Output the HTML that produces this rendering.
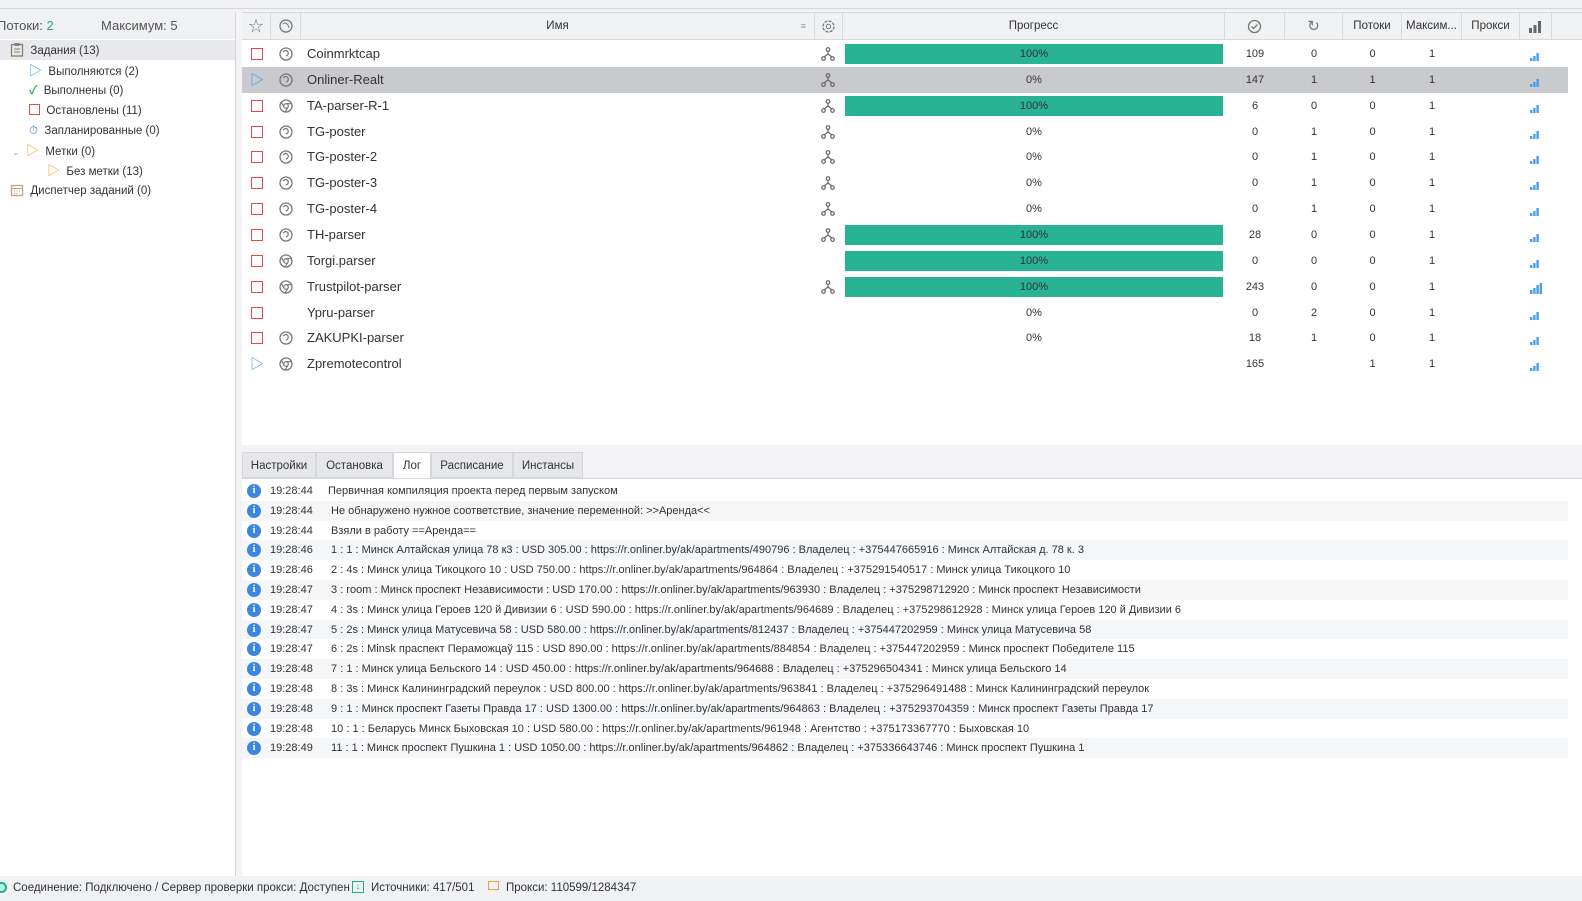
<!DOCTYPE html>
<html><head><meta charset="utf-8">
<style>
*{margin:0;padding:0;box-sizing:border-box}
body{width:1582px;height:901px;background:#f3f3f5;font-family:"Liberation Sans","Noto Sans CJK JP",sans-serif;font-size:12px;color:#333;position:relative;overflow:hidden}
.a{position:absolute}
.top{left:0;top:0;width:1582px;height:9px;background:#eef0f3;border-bottom:1px solid #d4d6da}
.left{left:0;top:12px;width:236px;height:864px;background:#fff;border-right:1px solid #d4d6da}
.lh{left:0;top:0;width:235px;height:27px;background:#f0f1f3;font-size:13px;color:#555;line-height:27px}
.tree div{position:absolute;font-size:11.5px;color:#333;height:20px;line-height:20px;white-space:nowrap}
.tbl{left:242px;top:12px;width:1340px;height:433px;background:#fff;border-top:1px solid #d4d6da}
.hd{left:0;top:0;width:1340px;height:27px;background:#f0f1f3;border-bottom:1px solid #d8dadd}
.hd div{position:absolute;top:0;height:27px;border-right:1px solid #d8dadd;line-height:27px;text-align:center;font-size:11.5px;color:#333}
.row{position:absolute;left:0;width:1326px;height:26px}
.row.sel{background:#c9cacd}
.row div{position:absolute;top:0;height:26px;line-height:26px;font-size:11px;text-align:center}
.row .nm{left:65px;text-align:left;font-size:13px;color:#333}
.pb{left:603px!important;width:378px;top:3px!important;height:20px!important;line-height:20px!important}
.pb.g{background:#27b394}
.stop{left:9px;top:7px!important;width:12px;height:12px!important;border:1.5px solid #e8484d}
.tabs{left:242px;top:452px;width:340px;height:26px}
.tab{position:absolute;top:0;height:26px;line-height:26px;font-size:11.5px;background:#e6e7ea;border:1px solid #d4d6da;text-align:center;color:#333}
.log{left:242px;top:478px;width:1340px;height:398px;background:#fff;border-top:1px solid #d4d6da}
.lr{position:absolute;left:0;height:20px;line-height:20px;font-size:11px;white-space:nowrap;width:1326px}
.ic{position:absolute;left:5px;top:3px;width:14px;height:14px;border-radius:50%;background:#3d86de;color:#fff;font-weight:bold;font-size:10px;line-height:14px;text-align:center;font-family:"Liberation Serif",serif}
.lt{position:absolute;left:28px}
.lm{position:absolute;left:86px}
.status{left:0;top:879px;width:1582px;height:22px;background:#f0f1f3;font-size:11.5px;line-height:18px;color:#333}
</style></head><body>
<div class="a top"></div>
<div class="a left">
 <div class="a lh"><span style="position:absolute;left:-3px">Потоки: <span style="color:#27a98c">2</span></span><span style="position:absolute;left:101px">Максимум: <span>5</span></span></div>
 <div class="a" style="left:0;top:28px;width:235px;height:20px;background:#e8e9ec"></div>
 <div class="tree">
  <div style="left:10px;top:29px"><svg width="14" height="15" style="vertical-align:-3px"><rect x="1.5" y="2.5" width="11" height="11.5" fill="none" stroke="#8a7f70" stroke-width="1.3"/><rect x="4.5" y="1" width="5" height="3" fill="#8a7f70"/><path d="M4 7h6M4 10h6" stroke="#8a7f70"/></svg> &nbsp;Задания (13)</div>
  <div style="left:29px;top:49px"><span style="color:#2a9de0;font-size:13px">▷</span> &nbsp;Выполняются (2)</div>
  <div style="left:29px;top:69px"><span style="color:#22b04b;font-weight:bold">✓</span> &nbsp;Выполнены (0)</div>
  <div style="left:29px;top:89px"><span style="display:inline-block;width:11px;height:11px;border:1.5px solid #e8484d;vertical-align:-1px"></span> &nbsp;Остановлены (11)</div>
  <div style="left:29px;top:109px"><span style="color:#3d86de">⏱</span> &nbsp;Запланированные (0)</div>
  <div style="left:12px;top:129px"><span style="color:#aaa;font-size:9px">⌄</span> &nbsp;<span style="color:#f0a020;font-size:13px">▷</span> &nbsp;Метки (0)</div>
  <div style="left:47px;top:149px"><span style="color:#f0a020;font-size:13px">▷</span> &nbsp;Без метки (13)</div>
  <div style="left:10px;top:169px"><svg width="14" height="14" style="vertical-align:-3px"><rect x="1.5" y="2.5" width="11" height="10" fill="none" stroke="#c9a27a" stroke-width="1.3"/><path d="M2 5.5h10" stroke="#c9a27a"/><path d="M4 8h1M6.5 8h1M9 8h1M4 10.5h1M6.5 10.5h1" stroke="#c9a27a"/></svg> &nbsp;Диспетчер заданий (0)</div>
 </div>
</div>
<div class="a tbl">
 <div class="a hd">
  <div style="left:0;width:29px;color:#777;font-size:15px">☆</div>
  <div style="left:29px;width:30px"><svg width="14" height="14" style="margin-top:6px"><circle cx="7" cy="7" r="6" fill="none" stroke="#777" stroke-width="1.3"/><path d="M4 5q2 -2 4 0t2 4" fill="none" stroke="#777"/></svg></div>
  <div style="left:59px;width:514px">Имя<span style="position:absolute;right:8px;color:#999;font-size:9px">≡</span></div>
  <div style="left:573px;width:28px"><svg width="15" height="15" style="margin-top:6px"><circle cx="7.5" cy="7.5" r="5.5" fill="none" stroke="#777" stroke-width="1.3" stroke-dasharray="3 1.3"/><circle cx="7.5" cy="7.5" r="2.2" fill="none" stroke="#777"/></svg></div>
  <div style="left:601px;width:382px">Прогресс</div>
  <div style="left:983px;width:60px"><svg width="15" height="15" style="margin-top:6px"><circle cx="7.5" cy="7.5" r="6" fill="none" stroke="#777" stroke-width="1.3"/><path d="M4.5 7.5l2 2 4-4" fill="none" stroke="#777" stroke-width="1.3"/></svg></div>
  <div style="left:1043px;width:58px;color:#777;font-size:15px">↻</div>
  <div style="left:1101px;width:59px">Потоки</div>
  <div style="left:1160px;width:60px">Максим...</div>
  <div style="left:1220px;width:58px">Прокси</div>
  <div style="left:1278px;width:32px"><svg width="13" height="12" style="margin-top:8px"><rect x="0" y="7" width="3" height="5" fill="#666"/><rect x="4.5" y="4" width="3" height="8" fill="#666"/><rect x="9" y="0" width="3" height="12" fill="#666"/></svg></div>
 </div>
 <div id="rows"></div>
</div>
<div class="a tabs">
 <div class="tab" style="left:0;width:74px">Настройки</div>
 <div class="tab" style="left:74px;width:77px">Остановка</div>
 <div class="tab" style="left:151px;width:38px;background:#fff;border-bottom-color:#fff">Лог</div>
 <div class="tab" style="left:189px;width:82px">Расписание</div>
 <div class="tab" style="left:271px;width:70px">Инстансы</div>
</div>
<div class="a log" id="log"></div>
<div class="a status">
 <span style="position:absolute;left:-4px;top:3px;width:11px;height:11px;border-radius:50%;border:2px solid #27a98c;background:#bfe"></span>
 <span style="position:absolute;left:13px">Соединение: Подключено / Сервер проверки прокси: Доступен</span>
 <span style="position:absolute;left:352px;top:2px;width:12px;height:12px;border:1.5px solid #27a98c;font-size:9px;line-height:9px;text-align:center;color:#27a98c">↓</span>
 <span style="position:absolute;left:371px">Источники: 417/501</span>
 <span style="position:absolute;left:488px;top:2px;width:11px;height:9px;border:1.5px solid #e8a040"></span>
 <span style="position:absolute;left:506px">Прокси: 110599/1284347</span>
</div>
<script>
var R=[["Coinmrktcap","s","x",1,100,109,0,0,1],["Onliner-Realt","s","p",1,0,147,1,1,1],["TA-parser-R-1","c","x",1,100,6,0,0,1],["TG-poster","s","x",1,0,0,1,0,1],["TG-poster-2","s","x",1,0,0,1,0,1],["TG-poster-3","s","x",1,0,0,1,0,1],["TG-poster-4","s","x",1,0,0,1,0,1],["TH-parser","s","x",1,100,28,0,0,1],["Torgi.parser","c","x",0,100,0,0,0,1],["Trustpilot-parser","c","x",1,100,243,0,0,1],["Ypru-parser","","x",0,0,0,2,0,1],["ZAKUPKI-parser","s","x",0,0,18,1,0,1],["Zpremotecontrol","c","p",0,-1,165,"",1,1]];
var sG='<svg width="14" height="14"><circle cx="7" cy="7" r="6" fill="none" stroke="#777" stroke-width="1.3"/><path d="M4 5q3-3 5 0q1 3-2 4" fill="none" stroke="#777" stroke-width="1.2"/></svg>';
var cG='<svg width="14" height="14"><circle cx="7" cy="7" r="6" fill="none" stroke="#777" stroke-width="1.3"/><circle cx="7" cy="7" r="2.3" fill="none" stroke="#777" stroke-width="1.2"/><path d="M7 4.7h5.5M5 8.2l-2.5-4.5M9 8.2l-2.8 4.6" stroke="#777" stroke-width="1.1"/></svg>';
var br='<svg width="14" height="14"><circle cx="7" cy="2.5" r="1.8" fill="none" stroke="#666" stroke-width="1.2"/><circle cx="2.5" cy="11.5" r="1.8" fill="none" stroke="#666" stroke-width="1.2"/><circle cx="11.5" cy="11.5" r="1.8" fill="none" stroke="#666" stroke-width="1.2"/><path d="M7 4.3v2.7M3 10l4-3 4 3" fill="none" stroke="#666" stroke-width="1.2"/></svg>';
var h='';
R.forEach(function(r,i){
 h+='<div class="row'+(i==1?' sel':'')+'" style="top:'+(28+i*25.85)+'px">';
 h+=r[2]=="x"?'<div class="stop"></div>':'<div style="left:8px;color:#2a9de0;font-size:14px">▷</div>';
 if(r[1])h+='<div style="left:37px;top:6px;height:14px;line-height:0">'+(r[1]=="s"?sG:cG)+'</div>';
 h+='<div class="nm">'+r[0]+'</div>';
 if(r[3])h+='<div style="left:579px;top:6px;height:14px;line-height:0">'+br+'</div>';
 if(r[4]>=0)h+='<div class="pb'+(r[4]==100?' g':'')+'">'+r[4]+'%</div>';
 h+='<div style="left:983px;width:60px">'+r[5]+'</div><div style="left:1043px;width:58px">'+r[6]+'</div><div style="left:1101px;width:59px">'+r[7]+'</div><div style="left:1160px;width:60px">'+r[8]+'</div>';
 var b=i==9?[4,6,9,11]:[3,5,8];
 h+='<div style="left:1288px;top:8px;height:12px;line-height:0"><svg width="14" height="12">'+b.map(function(v,k){return '<rect x="'+(k*3.2)+'" y="'+(12-v)+'" width="2.4" height="'+v+'" fill="#4a9ee8"/>'}).join('')+'</svg></div></div>';
});
document.getElementById('rows').innerHTML=h;
var L=[["19:28:44","Первичная компиляция проекта перед первым запуском"],["19:28:44"," Не обнаружено нужное соответствие, значение переменной: >>Аренда<<"],["19:28:44"," Взяли в работу ==Аренда=="],["19:28:46"," 1 : 1 : Минск Алтайская улица 78 к3 : USD 305.00 : https://r.onliner.by/ak/apartments/490796 : Владелец : +375447665916 : Минск Алтайская д. 78 к. 3"],["19:28:46"," 2 : 4s : Минск улица Тикоцкого 10 : USD 750.00 : https://r.onliner.by/ak/apartments/964864 : Владелец : +375291540517 : Минск улица Тикоцкого 10"],["19:28:47"," 3 : room : Минск проспект Независимости : USD 170.00 : https://r.onliner.by/ak/apartments/963930 : Владелец : +375298712920 : Минск проспект Независимости"],["19:28:47"," 4 : 3s : Минск улица Героев 120 й Дивизии 6 : USD 590.00 : https://r.onliner.by/ak/apartments/964689 : Владелец : +375298612928 : Минск улица Героев 120 й Дивизии 6"],["19:28:47"," 5 : 2s : Минск улица Матусевича 58 : USD 580.00 : https://r.onliner.by/ak/apartments/812437 : Владелец : +375447202959 : Минск улица Матусевича 58"],["19:28:47"," 6 : 2s : Minsk праспект Пераможцаў 115 : USD 890.00 : https://r.onliner.by/ak/apartments/884854 : Владелец : +375447202959 : Минск проспект Победителе 115"],["19:28:48"," 7 : 1 : Минск улица Бельского 14 : USD 450.00 : https://r.onliner.by/ak/apartments/964688 : Владелец : +375296504341 : Минск улица Бельского 14"],["19:28:48"," 8 : 3s : Минск Калининградский переулок : USD 800.00 : https://r.onliner.by/ak/apartments/963841 : Владелец : +375296491488 : Минск Калининградский переулок"],["19:28:48"," 9 : 1 : Минск проспект Газеты Правда 17 : USD 1300.00 : https://r.onliner.by/ak/apartments/964863 : Владелец : +375293704359 : Минск проспект Газеты Правда 17"],["19:28:48"," 10 : 1 : Беларусь Минск Быховская 10 : USD 580.00 : https://r.onliner.by/ak/apartments/961948 : Агентство : +375173367770 : Быховская 10"],["19:28:49"," 11 : 1 : Минск проспект Пушкина 1 : USD 1050.00 : https://r.onliner.by/ak/apartments/964862 : Владелец : +375336643746 : Минск проспект Пушкина 1"]];
var g='';
L.forEach(function(l,i){g+='<div class="lr" style="top:'+(2+i*19.8)+'px'+(i%2?';background:#f5f6f8':';background:#fff')+'"><span class="ic">i</span><span class="lt">'+l[0]+'</span><span class="lm">'+l[1].replace(/^ /,'&nbsp;')+'</span></div>'});
document.getElementById('log').innerHTML=g;
</script>
</body></html>
